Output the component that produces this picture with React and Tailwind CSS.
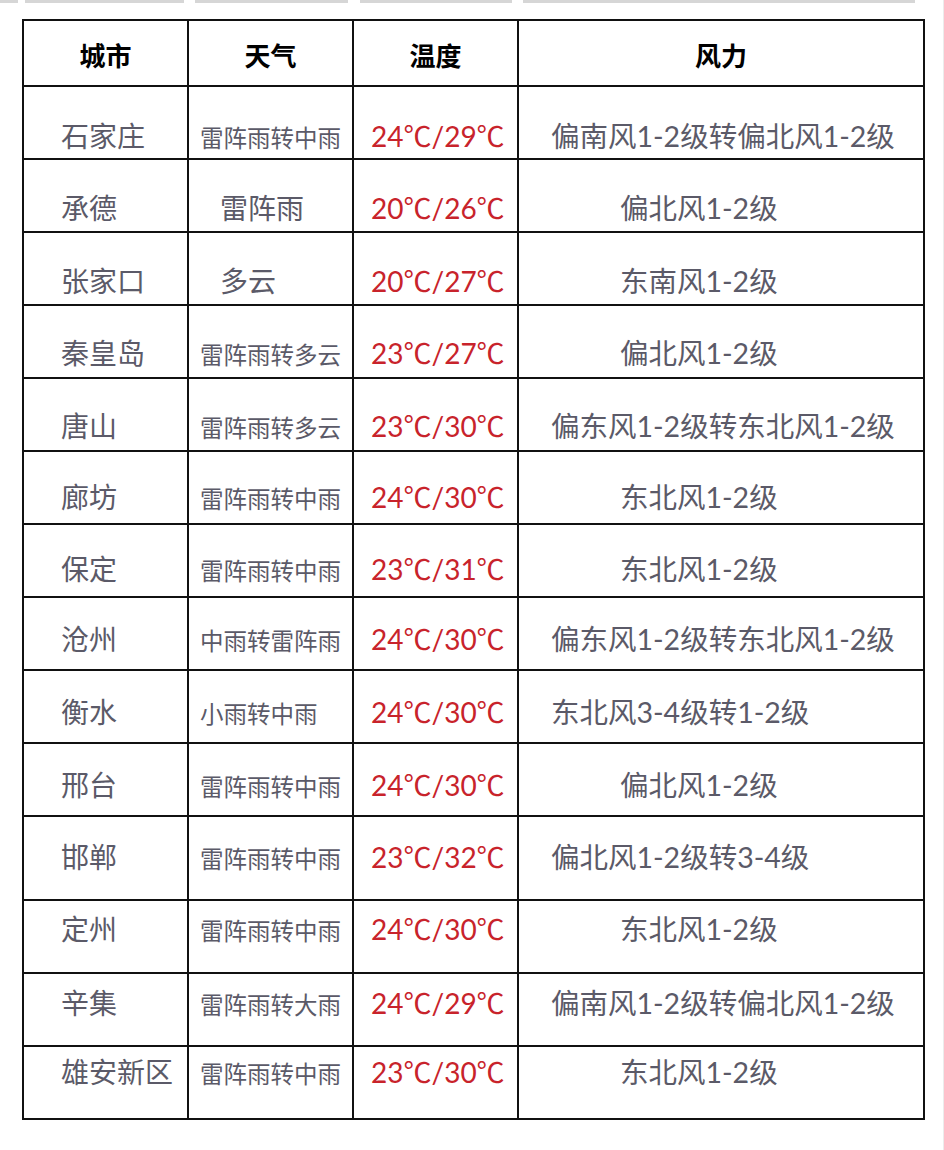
import React from "react";

const rows = [
  { city: "石家庄", w: "雷阵雨转中雨", big: false, t: "24℃/29℃", wind: "偏南风1-2级转偏北风1-2级", long: true, pt: 35, h: 73 },
  { city: "承德", w: "雷阵雨", big: true, t: "20℃/26℃", wind: "偏北风1-2级", long: false, pt: 34, h: 73 },
  { city: "张家口", w: "多云", big: true, t: "20℃/27℃", wind: "东南风1-2级", long: false, pt: 34, h: 73 },
  { city: "秦皇岛", w: "雷阵雨转多云", big: false, t: "23℃/27℃", wind: "偏北风1-2级", long: false, pt: 33, h: 73 },
  { city: "唐山", w: "雷阵雨转多云", big: false, t: "23℃/30℃", wind: "偏东风1-2级转东北风1-2级", long: true, pt: 33, h: 73 },
  { city: "廊坊", w: "雷阵雨转中雨", big: false, t: "24℃/30℃", wind: "东北风1-2级", long: false, pt: 31, h: 73 },
  { city: "保定", w: "雷阵雨转中雨", big: false, t: "23℃/31℃", wind: "东北风1-2级", long: false, pt: 30, h: 73 },
  { city: "沧州", w: "中雨转雷阵雨", big: false, t: "24℃/30℃", wind: "偏东风1-2级转东北风1-2级", long: true, pt: 27, h: 73 },
  { city: "衡水", w: "小雨转中雨", big: false, t: "24℃/30℃", wind: "东北风3-4级转1-2级", long: true, pt: 27, h: 73 },
  { city: "邢台", w: "雷阵雨转中雨", big: false, t: "24℃/30℃", wind: "偏北风1-2级", long: false, pt: 27, h: 73 },
  { city: "邯郸", w: "雷阵雨转中雨", big: false, t: "23℃/32℃", wind: "偏北风1-2级转3-4级", long: true, pt: 26, h: 84 },
  { city: "定州", w: "雷阵雨转中雨", big: false, t: "24℃/30℃", wind: "东北风1-2级", long: false, pt: 14, h: 73 },
  { city: "辛集", w: "雷阵雨转大雨", big: false, t: "24℃/29℃", wind: "偏南风1-2级转偏北风1-2级", long: true, pt: 15, h: 73 },
  { city: "雄安新区", w: "雷阵雨转中雨", big: false, t: "23℃/30℃", wind: "东北风1-2级", long: false, pt: 11, h: 73 },
];

const font = { fontFamily: "Lato, 'Noto Sans CJK SC', sans-serif" };

export default function App() {
  return (
    <div className="w-[944px] h-[1150px] bg-white border-r border-[#ececec] overflow-hidden" style={font}>
      <div className="flex h-[3px]">
        <div className="w-[18px] bg-[#d6d6d6]" />
        <div className="ml-[7px] w-[159px] bg-[#d6d6d6]" />
        <div className="ml-[11px] w-[153px] bg-[#d6d6d6]" />
        <div className="ml-[12px] w-[152px] bg-[#d6d6d6]" />
        <div className="ml-[11px] w-[392px] bg-[#d6d6d6]" />
      </div>
      <table className="ml-[22px] mt-[16px] w-[901px] table-fixed border-collapse border-2 border-[#111]">
        <colgroup>
          <col className="w-[165px]" />
          <col className="w-[165px]" />
          <col className="w-[165px]" />
          <col className="w-[406px]" />
        </colgroup>
        <thead>
          <tr className="h-[66px]">
            {["城市", "天气", "温度", "风力"].map((h) => (
              <th
                key={h}
                className="border-2 border-[#111] text-center align-middle pt-[4px] text-[26px] leading-[30px] font-semibold text-black"
                style={{ fontFamily: "'Noto Sans CJK SC', sans-serif" }}
              >
                {h}
              </th>
            ))}
          </tr>
        </thead>
        <tbody>
          {rows.map((r) => (
            <tr key={r.city} style={{ height: r.h }}>
              <td
                className="border-2 border-[#111] align-baseline pl-[37px] text-[28px] leading-[28px] text-[#5b5a68] whitespace-nowrap"
                style={{ paddingTop: r.pt }}
              >
                {r.city}
              </td>
              <td
                className={
                  "border-2 border-[#111] align-baseline leading-[28px] text-[#5b5a68] whitespace-nowrap " +
                  (r.big ? "pl-[31px] text-[28px]" : "pl-[11px] text-[23.5px]")
                }
                style={{ paddingTop: r.pt }}
              >
                {r.w}
              </td>
              <td
                className="border-2 border-[#111] align-baseline pl-[17px] text-[28px] leading-[28px] text-[#c8232b] whitespace-nowrap"
                style={{ paddingTop: r.pt }}
              >
                {r.t}
              </td>
              <td
                className={
                  "border-2 border-[#111] align-baseline text-[28.5px] leading-[28px] text-[#5b5a68] whitespace-nowrap " +
                  (r.long ? "pl-[32px]" : "pl-[101px]")
                }
                style={{ paddingTop: r.pt }}
              >
                {r.wind}
              </td>
            </tr>
          ))}
        </tbody>
      </table>
    </div>
  );
}
